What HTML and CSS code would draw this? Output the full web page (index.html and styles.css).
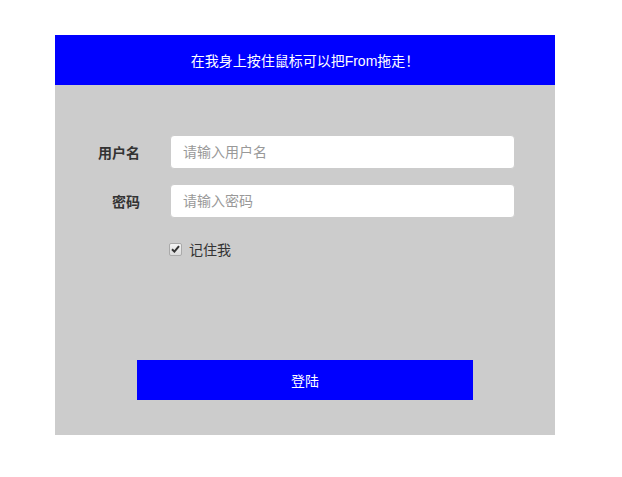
FILE: index.html
```html
<!DOCTYPE html>
<html lang="zh-CN">
<head>
<meta charset="utf-8">
<title>登陆</title>
<link rel="stylesheet" href="styles.css">
</head>
<body>
<div class="panel">
  <div class="panel-head">在我身上按住鼠标可以把From拖走！</div>
  <form class="panel-body">
    <div class="row">
      <label class="label" for="user">用户名</label>
      <input class="field" id="user" type="text" placeholder="请输入用户名">
    </div>
    <div class="row">
      <label class="label" for="pwd">密码</label>
      <input class="field" id="pwd" type="password" placeholder="请输入密码">
    </div>
    <div class="check-row">
      <span class="check-box">
        <svg width="9" height="8" viewBox="0 0 9 8"><path d="M1 4.2 L3.4 6.6 L8 1.2" fill="none" stroke="#333" stroke-width="2"/></svg>
      </span>
      <span class="check-text">记住我</span>
    </div>
    <div class="btn-row">
      <button class="btn" type="button">登陆</button>
    </div>
  </form>
</div>
</body>
</html>
```
FILE: styles.css
```css
html, body {
  margin: 0;
  padding: 0;
  background: #fff;
}
body {
  font-family: "Liberation Sans", "Noto Sans CJK SC", sans-serif;
  font-size: 14px;
  color: #333;
}
.panel {
  width: 500px;
  height: 400px;
  margin: 35px 0 0 55px;
  background: #ccc;
  display: flex;
  flex-direction: column;
}
.panel-head {
  height: 50px;
  background: #0000ff;
  color: #fff;
  display: flex;
  align-items: center;
  justify-content: center;
  font-size: 14px;
}
.panel-body {
  flex: 1;
  margin: 0;
  padding: 50px 0 35px 0;
  display: flex;
  flex-direction: column;
}
.row {
  display: flex;
  align-items: center;
  height: 34px;
  margin-bottom: 15px;
}
.label {
  width: 85px;
  text-align: right;
  font-weight: bold;
  color: #333;
}
.field {
  margin-left: 30px;
  width: 345px;
  height: 34px;
  box-sizing: border-box;
  border: 1px solid #ccc;
  border-radius: 4px;
  background: #fff;
  padding: 6px 12px;
  font-family: inherit;
  font-size: 14px;
  color: #555;
  outline: none;
}
.field::placeholder {
  color: #999;
}
.check-row {
  display: flex;
  align-items: center;
  height: 32px;
  padding-left: 114px;
}
.check-box {
  width: 11px;
  height: 11px;
  border: 1px solid #aaa;
  border-radius: 2px;
  background: linear-gradient(#f4f4f4, #dcdcdc);
  display: flex;
  align-items: center;
  justify-content: center;
  margin-right: 7px;
}
.check-text {
  color: #333;
}
.btn-row {
  margin-top: auto;
  display: flex;
  justify-content: center;
}
.btn {
  width: 336px;
  height: 40px;
  border: 0;
  background: #0000ff;
  color: #fff;
  font-family: inherit;
  font-size: 14px;
  padding: 0;
}
```
